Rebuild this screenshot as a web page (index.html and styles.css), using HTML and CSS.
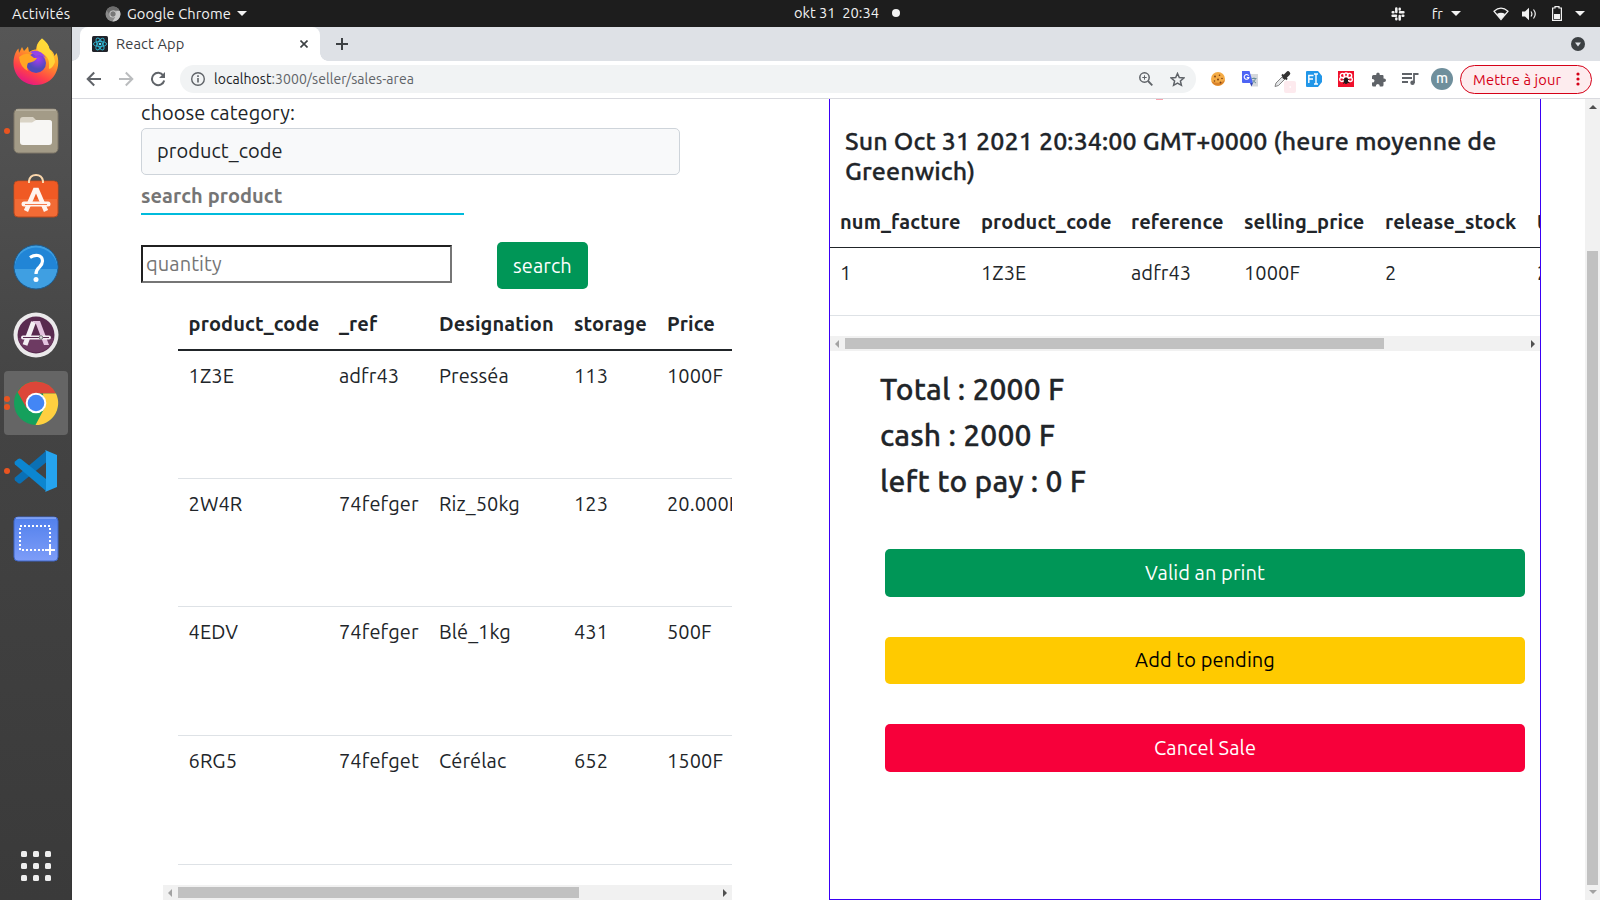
FILE: index.html
```html
<!DOCTYPE html>
<html lang="fr">
<head>
<meta charset="utf-8">
<title>React App</title>
<link rel="stylesheet" href="styles.css">
</head>
<body>
<header class="topbar">
  <span class="activities">Activités</span>
  <span class="appmenu">
    <svg width="16" height="16" viewBox="0 0 16 16"><circle cx="8" cy="8" r="7.5" fill="#8a8a8a"/><path d="M1.5 4.3A7.5 7.5 0 0 1 14.5 4.3H8L5 9.5Z" fill="#6c6c6c"/><path d="M14.8 5A7.5 7.5 0 0 1 7.5 15.5L11.2 9.5V5Z" fill="#c9c9c9"/><circle cx="8" cy="8" r="3.6" fill="#d5d5d5"/><circle cx="8" cy="8" r="2.7" fill="#777"/></svg>
    Google Chrome
    <i class="caret"></i>
  </span>
  <span class="clock">okt 31&nbsp; 20:34<i class="dot"></i></span>
  <span class="tray">
    <svg class="slack" width="14" height="14" viewBox="0 0 14 14" stroke="#f2f2f2" stroke-width="2.5" stroke-linecap="round"><path d="M5.3 1.6V5M1.7 5.3H2.4M1.6 8.7H5M5.3 11.6V12.3M8.7 9V12.4M11.6 8.7H12.3M9 5.3H12.4M8.7 1.7V2.4"/></svg>
    <span class="lang">fr</span><i class="caret"></i>
    <svg class="wifi" width="16" height="14" viewBox="0 0 16 14"><path d="M1 4.2Q8-1.8 15 4.2L8 12.6Z" fill="none" stroke="#f2f2f2" stroke-width="1.2"/><path d="M3.8 7Q8 4.6 12.2 7L8 12.6Z" fill="#f2f2f2"/></svg>
    <svg class="vol" width="15" height="14" viewBox="0 0 15 14"><path d="M0 4.5H3L7 .8V13.2L3 9.5H0Z" fill="#f2f2f2"/><path d="M9 4.5Q10.8 7 9 9.5M11.5 2.5Q15 7 11.5 11.5" fill="none" stroke="#f2f2f2" stroke-width="1.2"/></svg>
    <svg class="bat" width="10" height="15" viewBox="0 0 10 15"><path d="M.6 2H3V.6H7V2H9.4V14.4H.6Z" fill="none" stroke="#f2f2f2" stroke-width="1.2"/><path d="M2 8H8V13H2Z" fill="#f2f2f2"/></svg>
    <i class="caret"></i>
  </span>
</header>

<div class="desktop">
<nav class="dock">
  <div class="app firefox">
    <svg width="46" height="48" viewBox="0 0 46 48"><defs><linearGradient id="ff" x1=".8" y1="0" x2=".3" y2="1"><stop offset="0" stop-color="#ffe83c"/><stop offset=".4" stop-color="#ff9a26"/><stop offset=".75" stop-color="#ff4049"/><stop offset="1" stop-color="#e31587"/></linearGradient><radialGradient id="fp" cx=".6" cy=".3"><stop offset="0" stop-color="#a63bf2"/><stop offset="1" stop-color="#4f4bb8"/></radialGradient></defs><path d="M29 .5C33 4 36 7 36.500 11 40 13 41 16 41.500 18L43.500 15C46 21 46 29 42.500 35.500 38.500 43 31.500 47 23 47 10 47 .5 37 .5 25 .5 18 3 13 5.500 10.500L6 15 9 9 11 13Q13 11 15 8.500L16 14Q20 11 23 11.500 23.500 5 29 .5Z" fill="url(#ff)"/><path d="M29 .5C23 6 23 11 26 14 33 16 37 21 36 29 35 33 40 30 42 24 42 19 38 14 36.500 11 36 7 33 4 29 .5Z" fill="#ffdc3a" opacity=".85"/><circle cx="23" cy="25" r="10" fill="url(#fp)"/><path d="M6 19Q11 15 16 16L21 20 24 20Q22 24 15 25 13 29 15 33 7 29 6 19Z" fill="#ffa523"/><path d="M17 14Q27 10 33 20 28 16 23 18Z" fill="#9445e8"/></svg>
  </div>
  <div class="app">
    <i class="run"></i>
    <svg width="46" height="46" viewBox="0 0 46 46"><rect x="1" y="1" width="44" height="44" rx="4.500" fill="#a39b87" stroke="#7e7768"/><path d="M3 2H43" stroke="#c9c3b4"/><path d="M7 34V12Q7 9 10 9H20L23 12H36Q39 12 39 15V20Z" fill="#d9d3c5"/><path d="M7 14.500H19L23 12H36Q39 12 39 15V34Q39 37 36 37H10Q7 37 7 34Z" fill="#f7f6f4"/></svg>
  </div>
  <div class="app bag">
    <svg width="46" height="46" viewBox="0 0 46 46"><rect x="1" y="8" width="44" height="36" rx="4" fill="#f26b35" stroke="#b3481f"/><path d="M1.500 12Q2 8.500 5 8.500H41Q44.500 9 44.500 12V26H1.500Z" fill="#f05a24"/><path d="M16 10V8Q17 2 23 2T30 8V10" fill="none" stroke="#fbd7ac" stroke-width="2"/><path d="M13 38L22 17H24L33 38" fill="none" stroke="#fff3ee" stroke-width="4.500"/><path d="M11 31H35" stroke="#fff3ee" stroke-width="5" stroke-linecap="round"/><path d="M12 31.500H34" stroke="#f47b4c" stroke-width="1"/></svg>
  </div>
  <div class="app">
    <svg width="46" height="46" viewBox="0 0 46 46"><circle cx="23" cy="23" r="22" fill="#3f9fe2" stroke="#1c5d92"/><path d="M1.500 25A21.500 21.500 0 1 1 44.500 25Z" fill="#2185d6"/><path d="M17 13.500Q21 10.800 25 11.500 29.500 12.500 29.500 17 29.500 20 26.500 23 23 26 23 30" fill="none" stroke="#fff" stroke-width="3.200"/><circle cx="23" cy="35.500" r="2.500" fill="#fff"/></svg>
  </div>
  <div class="app">
    <svg width="46" height="46" viewBox="0 0 46 46"><circle cx="23" cy="23" r="22.500" fill="#ebe9eb"/><circle cx="23" cy="23" r="18.500" fill="#592a4f"/><path d="M5 26H41A18.500 18.500 0 0 1 5 26Z" fill="#6d3a62"/><path d="M12 33L20.500 10" stroke="#f4eff3" stroke-width="5"/><path d="M19 9H27L36 33H31L23 12Z" fill="#e3c3df"/><path d="M10 25.500H36" stroke="#f4eff3" stroke-width="4" stroke-linecap="round"/><path d="M10 25.500H36" stroke="#592a4f"/><circle cx="28" cy="25.500" r="1.800" fill="#ddd" stroke="#777"/></svg>
  </div>
  <div class="app active">
    <i class="run run-a"></i><i class="run run-b"></i>
    <svg width="46" height="46" viewBox="0 0 46 46"><circle cx="23" cy="23" r="22" fill="#15a05c"/><path d="M4.500 12A22 22 0 0 1 43 13.500H23L13.500 28Z" fill="#dc4639"/><path d="M43 13.500A22 22 0 0 1 22.500 45L31.500 28 30 13.500Z" fill="#ffcf40"/><circle cx="23" cy="23" r="10.300" fill="#fff"/><circle cx="23" cy="23" r="8.300" fill="#4386f5"/></svg>
  </div>
  <div class="app">
    <i class="run"></i>
    <svg width="46" height="46" viewBox="0 0 46 46"><path d="M2 29.500Q1 31 2 32.500L5 35Q6.500 36 8 35L33 14.500V3Z" fill="#0a70b5"/><path d="M2 16.500Q1 15 2 13.500L5 11Q6.500 10 8 11L33 31V43Z" fill="#0c86d0"/><path d="M32 2L44 7V39L32 44Q33 43 33 41V5Q33 3 32 2Z" fill="#25a4ef"/></svg>
  </div>
  <div class="app">
    <svg width="46" height="46" viewBox="0 0 46 46"><defs><linearGradient id="sh" x1="0" y1="0" x2="0" y2="1"><stop offset="0" stop-color="#5180ec"/><stop offset="1" stop-color="#7e9df8"/></linearGradient></defs><rect x="1" y="1" width="44" height="44" rx="4" fill="url(#sh)" stroke="#3e64c4"/><path d="M3 2H43" stroke="#a7c0ff"/><path d="M7 10H37V34H7Z" fill="none" stroke="#fff" stroke-width="2" stroke-dasharray="2 2"/><path d="M37 29V39M32 34H42" stroke="#fff" stroke-width="2"/></svg>
  </div>
  <div class="grid-btn"><i></i><i></i><i></i><i></i><i></i><i></i><i></i><i></i><i></i></div>
</nav>

<main class="browser">
  <div class="tabs">
    <div class="tab">
      <svg width="16" height="16" viewBox="0 0 16 16"><rect width="16" height="16" rx="1.500" fill="#20232a"/><g fill="none" stroke="#2fb5d2" stroke-width=".9"><ellipse cx="8" cy="8" rx="6.600" ry="2.600"/><ellipse cx="8" cy="8" rx="6.600" ry="2.600" transform="rotate(60 8 8)"/><ellipse cx="8" cy="8" rx="6.600" ry="2.600" transform="rotate(120 8 8)"/></g><circle cx="8" cy="8" r="1.300" fill="#61dafb"/></svg>
      <span class="title">React App</span>
      <svg class="close" width="8" height="8" viewBox="0 0 8 8"><path d="M.5.5L7.500 7.500M7.500.5L.5 7.500" stroke="#3c4043" stroke-width="1.600"/></svg>
    </div>
    <svg class="newtab" width="12" height="12" viewBox="0 0 12 12"><path d="M6 0V12M0 6H12" stroke="#3c4043" stroke-width="2"/></svg>
    <svg class="tabsearch" width="14" height="14" viewBox="0 0 14 14"><circle cx="7" cy="7" r="7" fill="#3c4043"/><path d="M4 5.500H10L7 9.500Z" fill="#dee1e6"/></svg>
  </div>
  <div class="toolbar">
    <svg width="16" height="16" viewBox="0 0 16 16" fill="none" stroke="#5f6368" stroke-width="2"><path d="M15 8H2.500M8.200 1.500L1.700 8 8.200 14.500"/></svg>
    <svg width="16" height="16" viewBox="0 0 16 16" fill="none" stroke="#babcbe" stroke-width="2"><path d="M1 8H13.500M7.800 1.500L14.300 8 7.800 14.500"/></svg>
    <svg width="16" height="16" viewBox="0 0 16 16"><path d="M13.300 4.500A6.200 6.200 0 1 0 14.200 9.500" fill="none" stroke="#5f6368" stroke-width="2"/><path d="M15 1V7H9Z" fill="#5f6368"/></svg>
    <div class="omnibox">
      <svg width="14" height="14" viewBox="0 0 14 14"><circle cx="7" cy="7" r="6.300" fill="none" stroke="#5f6368" stroke-width="1.400"/><path d="M7 6V10.500M7 3.300V4.900" stroke="#5f6368" stroke-width="1.600"/></svg>
      <span class="url"><b>localhost</b>:3000/seller/sales-area</span>
      <svg class="zoomicon" width="14" height="14" viewBox="0 0 14 14" fill="none" stroke="#5f6368"><circle cx="5.500" cy="5.500" r="4.700" stroke-width="1.500"/><path d="M9 9L13.300 13.300" stroke-width="1.800"/><path d="M5.500 3.300V7.700M3.300 5.500H7.700"/></svg>
      <svg width="15" height="15" viewBox="0 0 15 15"><path d="M7.500 1.500L9.300 5.600 13.800 6 10.400 9 11.400 13.300 7.500 11 3.600 13.300 4.600 9 1.200 6 5.700 5.600Z" fill="none" stroke="#5f6368" stroke-width="1.500"/></svg>
    </div>
    <div class="exts">
      <svg width="16" height="16" viewBox="0 0 16 16"><circle cx="8" cy="8" r="7" fill="#f4ab45"/><path d="M1.500 10.500A7 7 0 0 0 14.800 8.500Q11 14 1.500 10.500Z" fill="#d9822b"/><g fill="#7c3f12"><circle cx="5" cy="5.500" r=".9"/><circle cx="9.500" cy="4.300" r=".8"/><circle cx="8" cy="8.500" r="1"/><circle cx="12" cy="7.500" r=".8"/><circle cx="4.500" cy="10" r=".8"/><circle cx="10.500" cy="11.500" r=".9"/></g></svg>
      <svg width="16" height="16" viewBox="0 0 16 16"><path d="M6 3H16V15.500H9Z" fill="#d5d8dc"/><path d="M0 0H7.500L11 12H1Q0 12 0 11Z" fill="#4d64f4"/><path d="M8 12H11L9.500 15.500Z" fill="#3243b5"/><path d="M6.600 4.600A2.400 2.400 0 1 0 6.900 6.500H4.800" fill="none" stroke="#fff" stroke-width="1.100"/><path d="M9.500 7.500H14.500M12 6.500V7.500M13.500 7.500Q13 10 10.500 12M10.800 9Q12 11 14 12" fill="none" stroke="#6b8f9c"/></svg>
      <svg width="22" height="22" viewBox="0 0 22 22"><rect x="13" y="13" width="12" height="12" rx="2" fill="#fdeaee"/><path d="M18.500 19H20" stroke="#fff" stroke-width="1.500"/><path d="M4 18.500L5 15 11.500 8.500 14 11 7.500 17.500Z" fill="#e4e6e8" stroke="#777" stroke-width=".9"/><path d="M11 6.500L16 11.500" stroke="#333" stroke-width="2"/><path d="M13.500 9L17 5.500" stroke="#333" stroke-width="4.500" stroke-linecap="round"/></svg>
      <svg width="16" height="16" viewBox="0 0 16 16"><path d="M1 0H12L16 5V11L12 16H1Q0 16 0 15V1Q0 0 1 0Z" fill="#2196e8"/><path d="M2.800 12V4.500H7.500M2.800 8H7M8 3H9.500Q10 3 10 4V12Q10 13 9.500 13H8M12 3H10.500Q10 3 10 4M12 13H10.500Q10 13 10 12" fill="none" stroke="#fff" stroke-width="1.400"/></svg>
      <svg width="16" height="16" viewBox="0 0 16 16"><rect width="16" height="16" fill="#f0102c"/><g fill="none" stroke="#fff" stroke-width="1.300"><circle cx="4.500" cy="4.500" r="2.200"/><circle cx="11.500" cy="4.500" r="2.200"/><circle cx="8" cy="4" r="2"/><circle cx="3.700" cy="8.500" r="2"/><circle cx="12.300" cy="8.500" r="2"/></g><ellipse cx="8" cy="9.800" rx="2" ry="3.200" fill="#1a1a1a"/><path d="M5 12.500L11 8M5 8.500L11.500 12" stroke="#1a1a1a"/></svg>
      <svg width="15" height="15" viewBox="0 0 15 15"><path d="M1 4.500Q1 3 2.500 3H5.200Q4.900.5 7 .5T8.800 3H11.500Q12.500 3 12.500 4V6.500Q15 6.200 15 8.300T12.500 10V13Q12.500 14.500 11 14.500H8.800Q9 12 6.800 12T4.800 14.500H2.500Q1 14.500 1 13V10.600Q3.500 10.600 3.500 8.700T1 7Z" fill="#5f6368"/></svg>
      <svg width="17" height="14" viewBox="0 0 17 14"><path d="M0 2H10M0 6H10M0 10H6" stroke="#5f6368" stroke-width="1.800"/><circle cx="10.500" cy="10.800" r="2.200" fill="#5f6368"/><path d="M12 11V2H16.500" fill="none" stroke="#5f6368" stroke-width="1.800"/></svg>
    </div>
    <span class="avatar">m</span>
    <span class="update">Mettre à jour<svg width="4" height="14" viewBox="0 0 4 14" fill="#d50017"><circle cx="2" cy="2" r="1.600"/><circle cx="2" cy="7" r="1.600"/><circle cx="2" cy="12" r="1.600"/></svg></span>
  </div>

  <div class="page">
    <section class="catalog">
      <div class="label">choose category:</div>
      <div class="select">product_code</div>
      <div class="search-input">search product</div>
      <div class="qty-row"><div class="qty">quantity</div><button class="btn search-btn">search</button></div>
      <div class="products">
        <table>
          <colgroup><col class="c151"><col class="c100"><col class="c135"><col class="c93"><col class="c110"></colgroup>
          <thead><tr><th>product_code</th><th>_ref</th><th>Designation</th><th>storage</th><th>Price</th></tr></thead>
          <tbody>
            <tr class="short"><td>1Z3E</td><td>adfr43</td><td>Presséa</td><td>113</td><td>1000F</td></tr>
            <tr class="short"><td>2W4R</td><td>74fefger</td><td>Riz_50kg</td><td>123</td><td>20.000F</td></tr>
            <tr><td>4EDV</td><td>74fefger</td><td>Blé_1kg</td><td>431</td><td>500F</td></tr>
            <tr><td>6RG5</td><td>74fefget</td><td>Cérélac</td><td>652</td><td>1500F</td></tr>
          </tbody>
        </table>
      </div>
      <div class="hscroll"><i class="arrow left"></i><i class="thumb"></i><i class="arrow right"></i></div>
    </section>

    <section class="invoice">
      <i class="remnant"></i>
      <h5>Sun Oct 31 2021 20:34:00 GMT+0000 (heure moyenne de Greenwich)</h5>
      <div class="lines">
        <table>
          <colgroup><col class="c141"><col class="c150"><col class="c113"><col class="c141"><col class="c152"><col class="c110"></colgroup>
          <thead><tr><th>num_facture</th><th>product_code</th><th>reference</th><th>selling_price</th><th>release_stock</th><th>total</th></tr></thead>
          <tbody><tr><td>1</td><td>1Z3E</td><td>adfr43</td><td>1000F</td><td>2</td><td>2000F</td></tr></tbody>
        </table>
      </div>
      <div class="hscroll"><i class="arrow left"></i><i class="thumb"></i><i class="arrow right"></i></div>
      <div class="totals"><h4>Total : 2000 F</h4><h4>cash : 2000 F</h4><h4>left to pay : 0 F</h4></div>
      <div class="actions">
        <button class="btn valid">Valid an print</button>
        <button class="btn pending">Add to pending</button>
        <button class="btn cancel">Cancel Sale</button>
      </div>
    </section>
    <div class="vscroll"><i class="arrow up"></i><i class="vthumb"></i><i class="arrow down"></i></div>
  </div>
</main>
</div>
</body>
</html>
```
FILE: styles.css
```css
* { box-sizing: border-box; }
body { margin: 0; width: 1600px; height: 900px; overflow: hidden; display: flex; flex-direction: column; background: #fff; font-family: Ubuntu, "Noto Sans", sans-serif; }
svg { display: block; flex: none; }
i { display: block; flex: none; }

/* system bar */
.topbar { position: relative; flex: none; height: 27px; background: #1d1d1d; color: #f2f2f2; font-size: 14.67px; letter-spacing: .08px; display: flex; align-items: center; padding-left: 12px; }
.activities { width: 93px; letter-spacing: .2px; }
.appmenu { display: flex; align-items: center; gap: 6px; }
.caret { border: 5px solid transparent; border-top: 5px solid #f2f2f2; border-bottom: 0; }
.clock { position: absolute; left: 794px; top: 4px; display: flex; align-items: center; letter-spacing: 0; }
.dot { width: 8px; height: 8px; border-radius: 50%; background: #f2f2f2; margin-left: 13px; }
.tray { margin-left: auto; display: flex; align-items: center; padding-right: 15px; }
.lang { margin: 0 8px 0 27px; }
.wifi { margin-left: 32px; }
.vol { margin-left: 13px; }
.bat { margin: 0 13px 0 15px; }

/* launcher */
.desktop { flex: 1; display: flex; min-height: 0; }
.dock { width: 72px; flex: none; background: linear-gradient(#565656, #434343 45%, #3a3a3a); border-right: 1px solid #363636; display: flex; flex-direction: column; align-items: center; padding-top: 4px; gap: 4px; }
.app { position: relative; width: 64px; height: 64px; border-radius: 4px; display: grid; place-items: center; }
.firefox svg { margin-bottom: 2px; }
.bag svg { margin-bottom: 6px; }
.active { background: #656565; }
.run { position: absolute; left: 0; top: 29px; width: 6px; height: 6px; border-radius: 50%; background: #e95420; }
.run-a { top: 25px; }
.run-b { top: 33px; }
.grid-btn { margin: auto 0 19px; display: grid; grid-template-columns: repeat(3, 6px); gap: 6px; }
.grid-btn i { height: 6px; border-radius: 1.5px; background: #eee; }

/* browser chrome */
.browser { flex: 1; min-width: 0; display: flex; flex-direction: column; }
.tabs { flex: none; height: 34px; background: #dee1e6; display: flex; align-items: center; padding: 0 15px 0 8px; color: #3c4043; font-size: 14.67px; }
.tab { position: relative; align-self: stretch; width: 240px; background: #fff; border-radius: 8px 8px 0 0; display: flex; align-items: center; gap: 8px; padding: 0 12px; }
.tab::before, .tab::after { content: ""; position: absolute; bottom: 0; width: 8px; height: 8px; }
.tab::before { left: -8px; background: radial-gradient(circle at 0 0, transparent 7.5px, #fff 8px); }
.tab::after { right: -8px; background: radial-gradient(circle at 100% 0, transparent 7.5px, #fff 8px); }
.title { padding-bottom: 1px; letter-spacing: .12px; }
.close { margin-left: auto; }
.newtab { margin-left: 16px; }
.tabsearch { margin-left: auto; }
.toolbar { flex: none; height: 38px; border-bottom: 1px solid #d9dadf; display: flex; align-items: center; padding: 0 8px 1px 14px; gap: 16px; }
.omnibox { flex: none; width: 1016px; height: 28px; border-radius: 14px; background: #f1f3f4; display: flex; align-items: center; padding: 0 11px; margin-left: -2px; font-size: 14px; }
.url { margin-left: 9px; color: #5f6368; letter-spacing: .06px; }
.url b { font-weight: 400; color: #202124; }
.zoomicon { margin: 0 17px 0 auto; }
.exts { flex: none; display: grid; grid-template-columns: repeat(7, 32px); place-items: center; margin-left: -10px; }
.exts svg { overflow: visible; }
.avatar { flex: none; width: 22px; height: 22px; border-radius: 50%; background: #6f8f9c; color: #fff; font-size: 14px; font-weight: 500; line-height: 20px; text-align: center; margin-left: -11px; }
.update { flex: none; margin-left: -9px; width: 132px; height: 29px; border: 1px solid #d50017; border-radius: 15px; background: #fdecee; color: #d50017; font-size: 14.67px; letter-spacing: .15px; display: flex; align-items: center; justify-content: space-between; padding: 0 11px 0 12px; }

/* page */
.page { flex: 1; min-height: 0; display: flex; color: #212529; font-size: 20px; line-height: 30px; letter-spacing: .08px; overflow: hidden; }
.catalog { flex: none; width: 660px; padding-left: 69px; }
.label { height: 29px; line-height: 28px; }
.select { width: 539px; height: 47px; border: 1px solid #ced4da; border-radius: 5px; background: #f8f9fa; padding: 7px 15px; }
.search-input { width: 323px; height: 40px; line-height: 42px; border-bottom: 2px solid #00bbdc; font-weight: 700; color: #757575; }
.qty-row { display: flex; align-items: flex-start; gap: 45px; margin-top: 27px; }
.qty { width: 311px; height: 38px; margin-top: 3px; border: 2px solid #767676; border-color: #202020 #767676 #767676 #202020; padding: 0 3px; line-height: 34px; color: #757575; }
.btn { border: 0; border-radius: 5px; font: inherit; letter-spacing: inherit; color: #fff; background: #009657; padding: 0; }
.search-btn { width: 91px; height: 47px; }
.products { margin: 10px 0 20px 37px; width: 554px; overflow: hidden; }
table { border-collapse: separate; border-spacing: 0; table-layout: fixed; width: 0; }
th, td { text-align: left; vertical-align: top; padding: 10px; white-space: nowrap; border-bottom: 1px solid #dee2e6; }
th { font-weight: 700; letter-spacing: .13px; }
td { height: 129px; }
.short td { height: 128px; }
.products th { height: 52px; border-bottom: 2px solid #212529; }
.products th, .products td { padding-left: 10.6px; padding-right: 0; }
.c150 { width: 150px; } .c151 { width: 150.4px; } .c100 { width: 100px; } .c135 { width: 135px; } .c93 { width: 93px; }
.c110 { width: 110px; } .c141 { width: 141px; } .c113 { width: 113px; } .c152 { width: 152px; }

.hscroll { height: 15px; background: #f1f1f1; display: flex; align-items: center; }
.catalog .hscroll { margin-left: 22px; width: 569px; }
.thumb { height: 11px; background: #c1c1c1; }
.catalog .thumb { width: 401px; }
.arrow { border: 4px solid transparent; }
.left { margin-left: 5px; border-right-color: #a3a3a3; border-left: 0; width: 4px; margin-right: 6px; }
.right { margin-left: auto; margin-right: 5px; border-left-color: #505050; border-right: 0; width: 4px; }

.invoice { position: relative; margin-left: 97px; flex: none; width: 712px; border: 1px solid #3a00f5; border-top: 0; display: flex; flex-direction: column; }
.remnant { position: absolute; left: 326px; top: 0; width: 7px; height: 1px; background: #f9a3ae; }
h5 { margin: 27px 14px 11px 15px; font-size: 25px; line-height: 30px; font-weight: 500; letter-spacing: .12px; -webkit-text-stroke: .3px; }
.lines { overflow: hidden; margin-bottom: 20px; }
.lines th { height: 51px; border-bottom-color: #212529; }
.lines td { height: 68px; }
.invoice .thumb { width: 539px; }
.totals { padding: 20px 0 0 50px; }
h4 { margin: 0 0 10px; font-size: 30px; line-height: 36px; font-weight: 500; letter-spacing: .18px; -webkit-text-stroke: .3px; }
.actions { display: flex; flex-direction: column; gap: 40px; margin: 40px 15px 0 55px; }
.actions .btn { height: 48px; }
.actions .pending { height: 47px; padding-bottom: 1px; background: #ffca00; color: #000; }
.actions .cancel { background: #f7003a; }

.vscroll { margin-left: auto; width: 15px; background: #f1f1f1; display: flex; flex-direction: column; align-items: center; }
.up { border-bottom-color: #505050; border-top: 0; height: 4px; margin-top: 6px; }
.vthumb { width: 11px; height: 634px; background: #c1c1c1; margin-top: 142px; }
.down { border-top-color: #a3a3a3; border-bottom: 0; height: 4px; margin-top: 5px; }
```
